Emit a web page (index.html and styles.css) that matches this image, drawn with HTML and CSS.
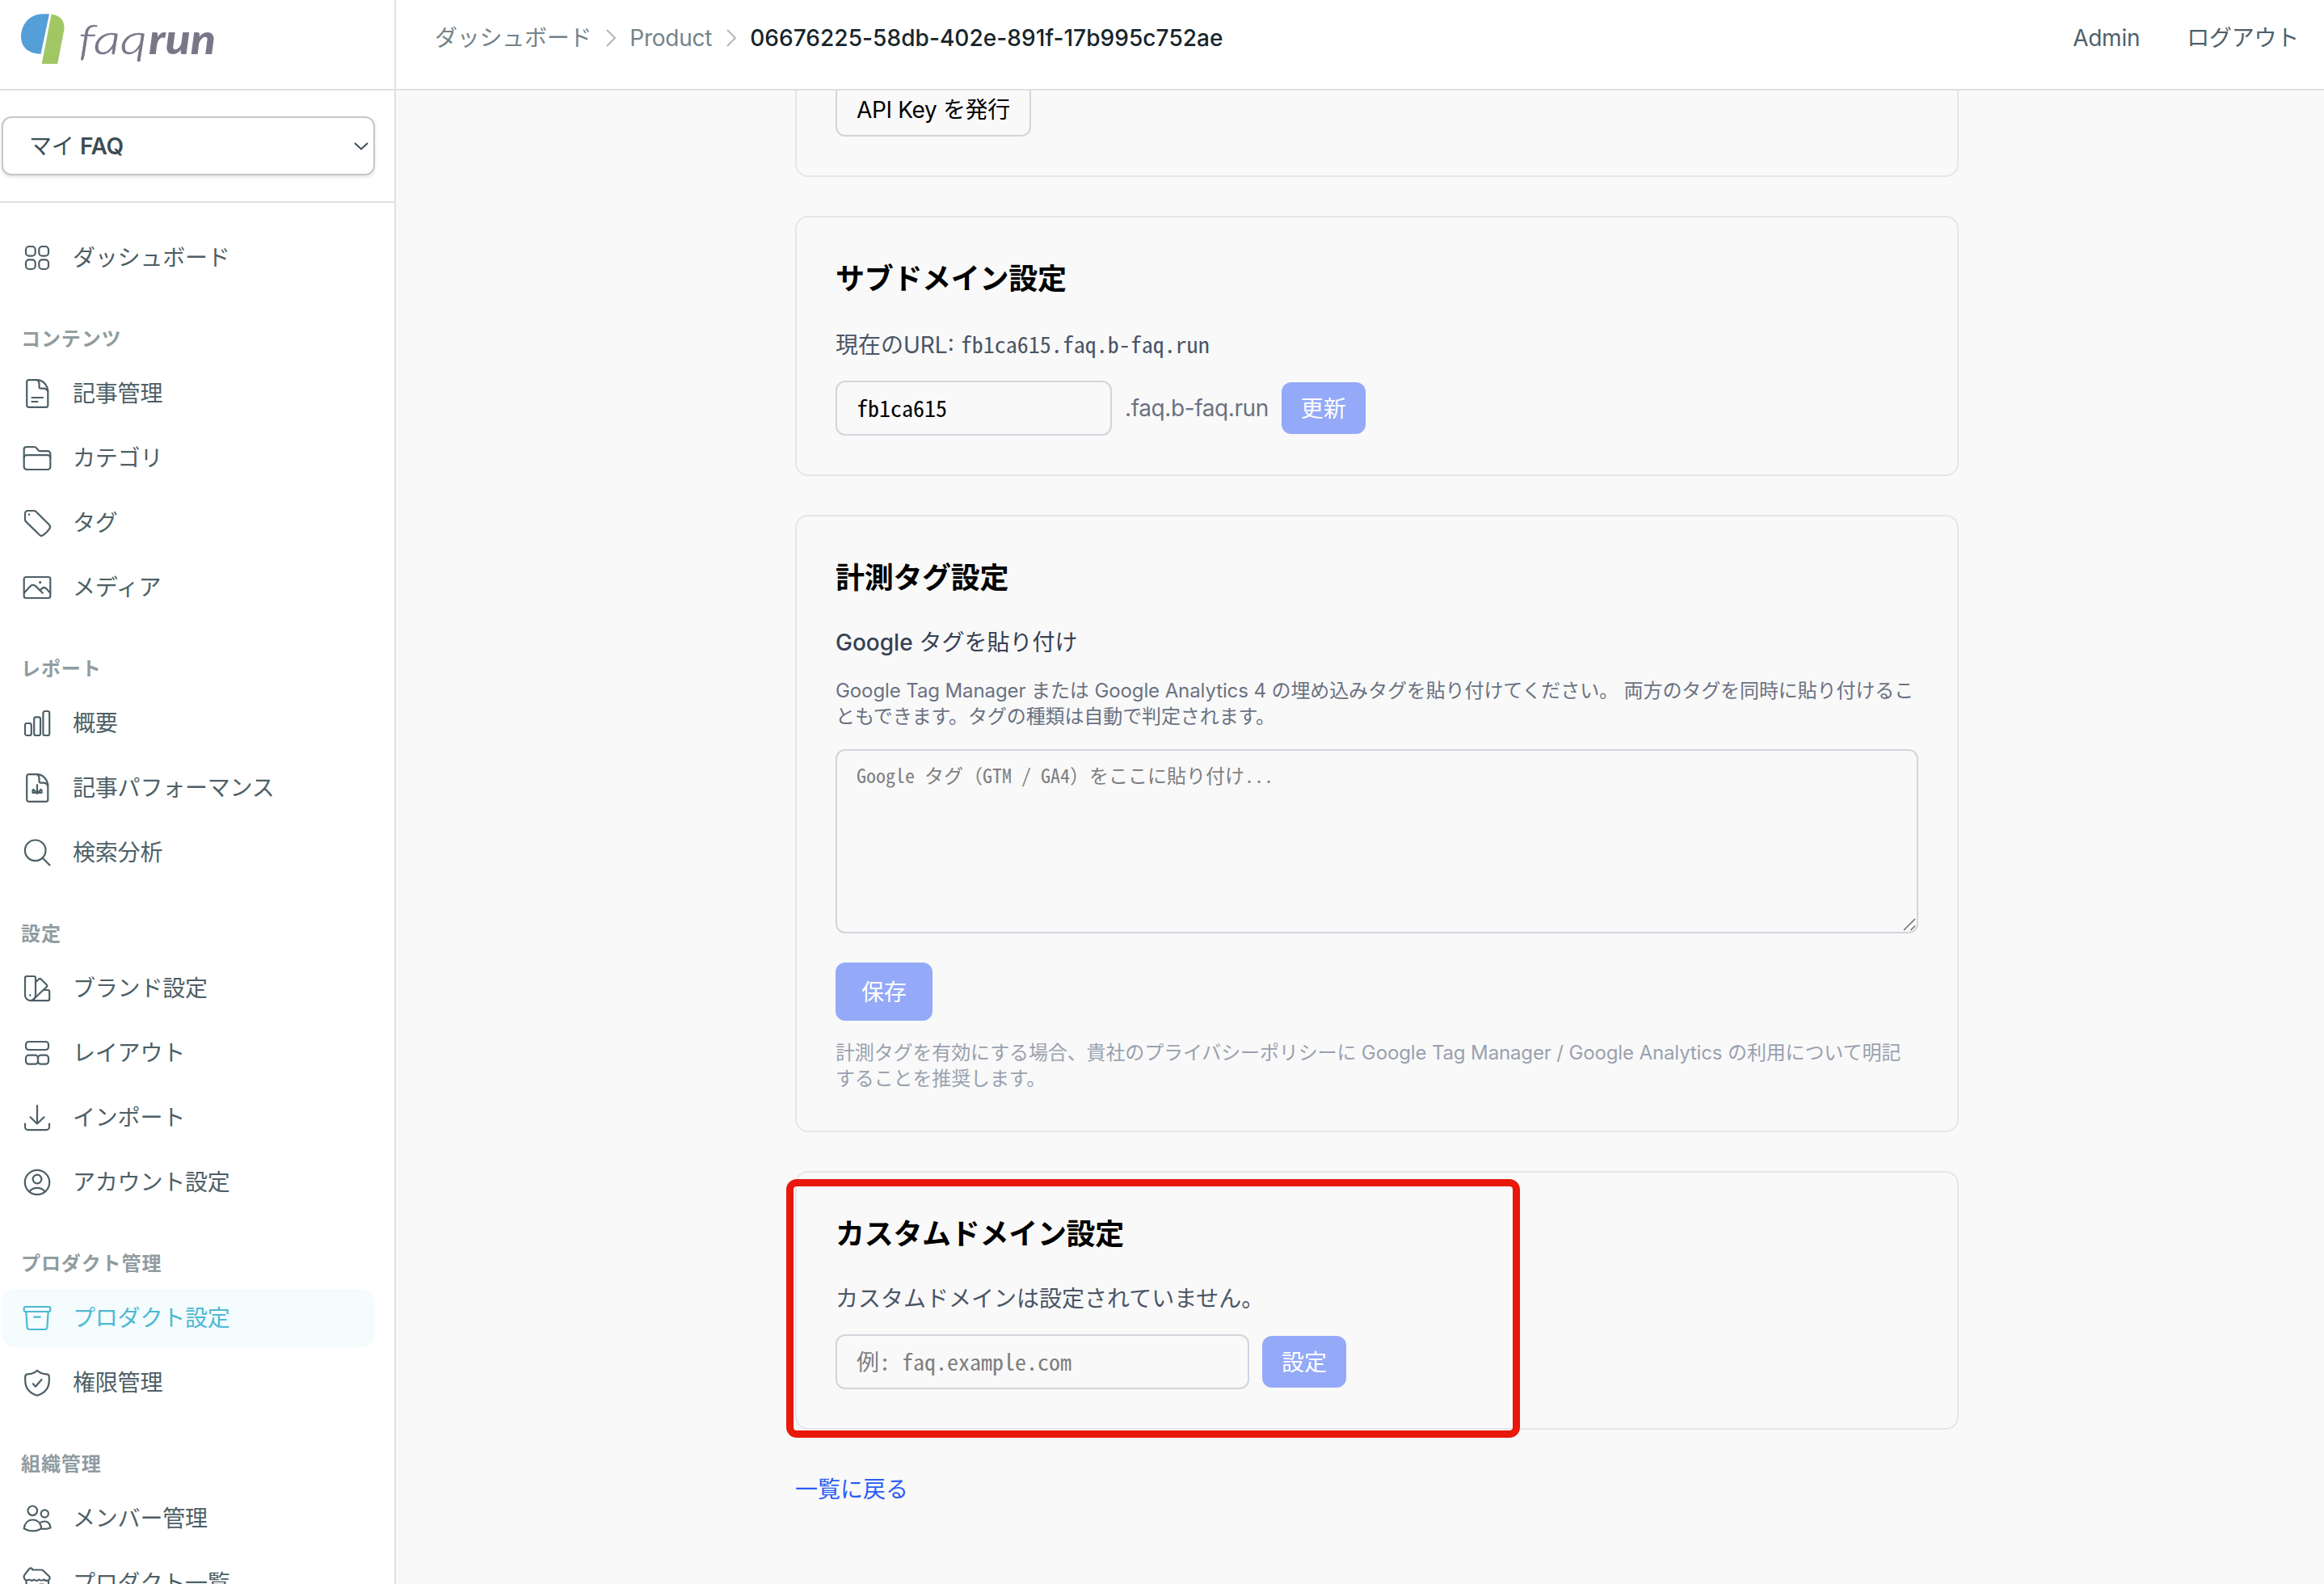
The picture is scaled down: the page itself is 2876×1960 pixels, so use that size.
FILE: index.html
```html
<!DOCTYPE html>
<html lang="ja">
<head>
    <meta charset="UTF-8">
    <title>faqrun - プロダクト設定</title>
    <link rel="stylesheet" href="styles.css">
</head>
<body>
    <aside class="sidebar">
        <div class="logo">
            <svg width="270" height="90" viewBox="0 0 270 90">
                <path fill="#549fd7" d="M61 17.3 50.5 66.7C36 67 26 58.500 26 45.500C26 30 37 17.300 53 17.300Z"/>
                <path fill="#a1c765" d="M63.500 17.700C74 18.500 81 26 79.300 37L71.200 79H51.700Z"/>
                <text class="logo-thin" x="97" y="67" textLength="85" lengthAdjust="spacingAndGlyphs">faq</text>
                <text class="logo-bold" x="184" y="67" textLength="83" lengthAdjust="spacingAndGlyphs">run</text>
            </svg>
        </div>
        <div class="product-picker">
            <div class="product-select">
                <span>マイ <b>FAQ</b></span>
                <svg width="18" height="10" viewBox="0 0 18 10"><path d="M1 1 9 8.500 17 1"/></svg>
            </div>
        </div>
        <nav class="nav">
            <a class="nav-item" href="#">
                <svg viewBox="0 0 36 36"><rect x="4" y="4" width="11.700" height="11.700" rx="4"/><rect x="20.300" y="4" width="11.700" height="11.700" rx="4"/><rect x="4" y="20.300" width="11.700" height="11.700" rx="4"/><rect x="20.300" y="20.300" width="11.700" height="11.700" rx="4"/></svg>
                ダッシュボード
            </a>

            <h3 class="nav-label">コンテンツ</h3>
            <a class="nav-item" href="#">
                <svg viewBox="0 0 36 36"><path d="M18 1.200H7.500A2.300 2.300 0 0 0 5.200 3.500V32.500A2.300 2.300 0 0 0 7.500 34.800H29A2.300 2.300 0 0 0 31.300 32.500V16C31.300 7.500 25 1.200 18 1.200Z"/><path d="M18 1.200C19.800 2.500 20.500 4 20.500 6V9.500A2.200 2.200 0 0 0 22.700 11.700H26C28.500 11.700 30.300 13 31.300 15M11.500 23H25M11.500 28H18.500"/></svg>
                記事管理
            </a>
            <a class="nav-item" href="#">
                <svg viewBox="0 0 36 36"><path d="M1.700 16V7A3 3 0 0 1 4.700 4H14.500C15.500 4 16.400 4.400 17 5.200L19.500 8.200C20.100 8.900 21 9.200 22 9.200H31A3.300 3.300 0 0 1 34.300 12.500V28.700A3.300 3.300 0 0 1 31 32H5A3.300 3.300 0 0 1 1.700 28.700Z"/><path d="M1.700 17.500A3.300 3.300 0 0 1 5 14.200H31A3.300 3.300 0 0 1 34.300 17.500"/></svg>
                カテゴリ
            </a>
            <a class="nav-item" href="#">
                <svg viewBox="0 0 36 36"><path d="M3 6.200A3.200 3.200 0 0 1 6.200 3H14C15 3 15.800 3.300 16.500 4L32.800 20.300C34.200 21.700 34.300 23.700 33.200 25.300C31.200 28.200 28.600 30.900 25.600 33C24.200 34.200 22.200 34.200 20.800 32.800L4 16.400C3.300 15.700 3 14.900 3 14Z"/><circle class="dot" cx="8" cy="7.800" r="1.300"/></svg>
                タグ
            </a>
            <a class="nav-item" href="#">
                <svg viewBox="0 0 36 36"><rect x="1.700" y="5" width="32.600" height="26" rx="2.500"/><path d="M2 24.500 9.300 16.600C11.500 14.200 14 14.200 16.500 16.600L24.800 24.800M21.500 21.500 23.500 19.500C25.500 17.500 27.500 17.500 29.500 19.500L34 24.500"/><circle class="dot" cx="21.700" cy="11.700" r="1.600"/></svg>
                メディア
            </a>

            <h3 class="nav-label">レポート</h3>
            <a class="nav-item" href="#">
                <svg viewBox="0 0 36 36"><rect x="3" y="18" width="7.800" height="15" rx="2.300"/><rect x="14.200" y="10.300" width="7.800" height="22.700" rx="2.300"/><rect x="25.400" y="3" width="7.800" height="30" rx="2.300"/></svg>
                概要
            </a>
            <a class="nav-item" href="#">
                <svg viewBox="0 0 36 36"><path d="M18 1.200H7.500A2.300 2.300 0 0 0 5.200 3.500V32.500A2.300 2.300 0 0 0 7.500 34.800H29A2.300 2.300 0 0 0 31.300 32.500V16C31.300 7.500 25 1.200 18 1.200Z"/><path d="M18 1.200C19.800 2.500 20.500 4 20.500 6V9.500A2.200 2.200 0 0 0 22.700 11.700H26C28.500 11.700 30.300 13 31.300 15M18 14V25M13.500 20 18 24.700 22.500 20M12.500 20.500V24H23.500V20.500"/></svg>
                記事パフォーマンス
            </a>
            <a class="nav-item" href="#">
                <svg viewBox="0 0 36 36"><circle cx="15.700" cy="15.300" r="12.800"/><path d="M24.800 24.800 33.500 33.500"/></svg>
                検索分析
            </a>

            <h3 class="nav-label">設定</h3>
            <a class="nav-item" href="#">
                <svg viewBox="0 0 36 36"><path d="M3 5A2 2 0 0 1 5 3H14A2 2 0 0 1 16 5V26.500A6.500 6.500 0 0 1 3 26.500Z"/><path d="M16 10.500 19.800 6.800A2.200 2.200 0 0 1 22.900 6.800L29.500 13.200A2.200 2.200 0 0 1 29.500 16.300L13.500 31.500M25.500 20H31A2.200 2.200 0 0 1 33.200 22.200V31A2.200 2.200 0 0 1 31 33.200H9.500"/><circle class="dot" cx="9.300" cy="26.500" r="1.200"/></svg>
                ブランド設定
            </a>
            <a class="nav-item" href="#">
                <svg viewBox="0 0 36 36"><rect x="4" y="4" width="28" height="10" rx="3.500"/><rect x="4" y="20.700" width="15" height="11" rx="3.500"/><rect x="19" y="20.700" width="13" height="11" rx="3.500"/></svg>
                レイアウト
            </a>
            <a class="nav-item" href="#">
                <svg viewBox="0 0 36 36"><path d="M18 3V25.500M9.500 17.300 18 25.500 26.500 17.300M3 25.500V29.500A3.600 3.600 0 0 0 6.600 33.100H29.400A3.600 3.600 0 0 0 33 29.500V25.500"/></svg>
                インポート
            </a>
            <a class="nav-item" href="#">
                <svg viewBox="0 0 36 36"><circle cx="18" cy="18" r="15.200"/><circle cx="18" cy="14" r="5.400"/><path d="M8.300 29.500C13.500 23.400 22.500 23.400 27.700 29.500"/></svg>
                アカウント設定
            </a>

            <h3 class="nav-label">プロダクト管理</h3>
            <a class="nav-item active" href="#">
                <svg viewBox="0 0 36 36"><rect x="1.700" y="4" width="32.600" height="6" rx="2"/><path d="M4.300 10 5.600 29.200A3 3 0 0 0 8.600 32H27.400A3 3 0 0 0 30.400 29.200L31.700 10M14.300 16.700H21.700"/></svg>
                プロダクト設定
            </a>
            <a class="nav-item" href="#">
                <svg viewBox="0 0 36 36"><path d="M18 2.800C15 5.800 11 7.200 6.500 7.400C4.500 7.500 3.200 8.500 3.200 10.500V15C3.200 24.500 9 31 18 33.800C27 31 32.800 24.500 32.800 15V10.500C32.800 8.500 31.500 7.500 29.500 7.400C25 7.200 21 5.800 18 2.800Z"/><path d="M12.800 19.300 16 22.700 23.500 14"/></svg>
                権限管理
            </a>

            <h3 class="nav-label">組織管理</h3>
            <a class="nav-item" href="#">
                <svg viewBox="0 0 36 36"><circle cx="12.300" cy="8.300" r="5.800"/><circle cx="27.300" cy="12" r="4.600"/><path d="M1.700 30.500C2.500 24 6.500 19.500 12.500 19.500C18.500 19.500 22.500 24 23.300 30.500C16.500 34.200 8.500 34.200 1.700 30.500ZM21.500 23.500C23.300 22 25 21.500 27.300 21.500C31.300 21.500 34 24.700 34.500 29.500C31 31 27 31.200 23.300 30.500"/></svg>
                メンバー管理
            </a>
            <a class="nav-item" href="#">
                <svg viewBox="0 0 36 36"><path d="M12.500 1.500C11.500-1.200 9.500-1 8 .5L2.500 7.500C.8 10 1.800 13.300 4 14.300C6.500 15 7.500 13.500 8.500 13.500C10.500 15.200 12.500 15 14 13.500C16 15.200 18.500 15.200 20.500 13.500C22 15 24.500 15 26 13.500C28 15 30.500 15 32.500 14C33.800 12.500 33.800 10.500 32.800 9.500L25.500 2.500C24.800 1.800 24 1.500 23 1.500ZM4.500 14.500V30A3 3 0 0 0 7.500 33H29A3 3 0 0 0 32 30V14.500M20 33V21.500A2 2 0 0 1 22 19.500H26"/></svg>
                プロダクト一覧
            </a>
        </nav>
    </aside>

    <div class="page">
        <header class="topbar">
            <div class="breadcrumb">
                <a href="#">ダッシュボード</a>
                <svg width="14" height="24" viewBox="0 0 14 24"><path d="M2 2 12 12 2 22"/></svg>
                <a href="#">Product</a>
                <svg width="14" height="24" viewBox="0 0 14 24"><path d="M2 2 12 12 2 22"/></svg>
                <span class="current">06676225-58db-402e-891f-17b995c752ae</span>
            </div>
            <div class="user-menu">
                <a href="#">Admin</a>
                <a href="#">ログアウト</a>
            </div>
        </header>

        <main class="content">
            <section class="card">
                <button class="btn-outline">API Key を発行</button>
            </section>

            <section class="card">
                <h2>サブドメイン設定</h2>
                <p class="text">現在のURL: <span class="mono">fb1ca615.faq.b-faq.run</span></p>
                <div class="form-row">
                    <input class="mono subdomain-input" type="text" value="fb1ca615">
                    <span class="suffix">.faq.b-faq.run</span>
                    <button class="btn">更新</button>
                </div>
            </section>

            <section class="card">
                <h2>計測タグ設定</h2>
                <label class="text label" for="gtag"><b>Google</b> タグを貼り付け</label>
                <p class="help">Google Tag Manager または Google Analytics 4 の埋め込みタグを貼り付けてください。 両方のタグを同時に貼り付けるこ<br>ともできます。タグの種類は自動で判定されます。</p>
                <div class="textarea-wrap">
                    <textarea class="mono" id="gtag" placeholder="Google タグ（GTM / GA4）をここに貼り付け..."></textarea>
                    <svg class="grip" width="16" height="16" viewBox="0 0 16 16"><path d="M1 15 15 1M9.500 15 15 9.500"/></svg>
                </div>
                <button class="btn btn-save">保存</button>
                <p class="help note">計測タグを有効にする場合、貴社のプライバシーポリシーに Google Tag Manager / Google Analytics の利用について明記<br>することを推奨します。</p>
            </section>

            <section class="card">
                <h2>カスタムドメイン設定</h2>
                <p class="text">カスタムドメインは設定されていません。</p>
                <div class="form-row">
                    <input class="mono domain-input" type="text" placeholder="例: faq.example.com">
                    <button class="btn">設定</button>
                </div>
                <div class="highlight"></div>
            </section>

            <a class="back-link" href="#">一覧に戻る</a>
        </main>
    </div>
</body>
</html>
```

FILE: styles.css
```css
* {
    box-sizing: border-box;
}
body {
    display: flex;
    height: 1960px;
    margin: 0;
    overflow: hidden;
    background-color: #f9f9f9;
    font-family: Inter, "Noto Sans CJK JP", sans-serif;
    font-size: 28px;
    line-height: 40px;
    color: #000;
}
a {
    color: inherit;
    text-decoration: none;
}
h2, h3, p {
    margin: 0;
}
svg {
    display: block;
    flex: none;
}
input, textarea, button {
    font-family: inherit;
    font-size: 28px;
    background: transparent;
}

/* Sidebar */
.sidebar {
    width: 490px;
    flex: none;
    overflow: hidden;
    background-color: #fff;
    border-right: 2px solid #dfe1e1;
}
.logo {
    height: 112px;
    border-bottom: 2px solid #dfe1e1;
}
.logo text {
    font-family: Lato, sans-serif;
    font-style: italic;
    font-size: 52px;
    fill: #797787;
}
.logo .logo-thin {
    font-weight: 300;
    stroke: #797787;
    stroke-width: 0.5;
}
.logo .logo-bold {
    font-weight: 900;
}
.product-picker {
    height: 139px;
    padding: 32px 24px 0 2px;
    border-bottom: 2px solid #dfe1e1;
}
.product-select {
    display: flex;
    align-items: center;
    justify-content: space-between;
    height: 73px;
    padding: 0 6px 0 32px;
    border: 2px solid #c2c8ca;
    border-radius: 12px;
    box-shadow: 0 2px 4px rgba(0, 0, 0, 0.12);
    letter-spacing: -0.3px;
    color: #3c4d53;
}
.product-select b {
    font-weight: 600;
}
.product-select svg {
    fill: none;
    stroke: #3c4d53;
    stroke-width: 2;
}
.nav {
    display: flex;
    flex-direction: column;
    gap: 8px;
    padding: 32px 24px 0 2px;
}
.nav-item {
    display: flex;
    align-items: center;
    gap: 26px;
    height: 72px;
    flex: none;
    padding-left: 26px;
    border-radius: 16px;
    letter-spacing: -0.2px;
    color: #4d5f66;
}
.nav-item svg {
    width: 36px;
    height: 36px;
    overflow: visible;
    fill: none;
    stroke: currentColor;
    stroke-width: 2.2;
    stroke-linecap: round;
    stroke-linejoin: round;
}
.nav-item .dot {
    fill: currentColor;
    stroke: none;
}
.nav-item.active {
    background-color: #f4fcfe;
    color: #4eb9d2;
}
.nav-label {
    height: 36px;
    margin: 39px 0 5px 24px;
    font-size: 24px;
    font-weight: 700;
    line-height: 36px;
    letter-spacing: 0.9px;
    color: #909ca0;
}

/* Top bar */
.page {
    display: flex;
    flex-direction: column;
    flex: 1;
    min-width: 0;
}
.topbar {
    display: flex;
    justify-content: space-between;
    position: relative;
    z-index: 1;
    height: 112px;
    flex: none;
    padding: 27px 31px 0 48px;
    background-color: #fff;
    border-bottom: 2px solid #dfe1e1;
    letter-spacing: -0.25px;
}
.breadcrumb {
    display: flex;
    align-items: flex-start;
    gap: 16.5px;
    color: #74838a;
}
.breadcrumb svg {
    margin-top: 8px;
    fill: none;
    stroke: #b0b9bd;
    stroke-width: 2;
}
.breadcrumb .current {
    font-weight: 500;
    letter-spacing: 0.07px;
    color: #16252b;
}
.user-menu {
    display: flex;
    gap: 58px;
    color: #4f6068;
}

/* Settings cards */
.content {
    width: 1440px;
    margin: -61px 0 0 494px;
}
.card {
    position: relative;
    margin-bottom: 48px;
    padding: 48px;
    border: 2px solid #e4e6eb;
    border-radius: 16px;
}
.card h2 {
    margin-bottom: 32px;
    font-size: 36px;
    font-weight: 700;
    line-height: 56px;
    letter-spacing: -0.3px;
}
.text {
    color: #4a5565;
}
.label {
    display: block;
    color: #364153;
}
.label b {
    font-weight: 500;
}
.help {
    margin-top: 24px;
    font-size: 24px;
    line-height: 32px;
    letter-spacing: -0.1px;
    color: #6a7282;
    white-space: nowrap;
}
.help.note {
    letter-spacing: -0.13px;
    color: #99a1af;
}
.mono {
    font-family: "Noto Sans Mono CJK JP", "DejaVu Sans Mono", monospace;
}
.form-row {
    display: flex;
    align-items: center;
    gap: 16px;
    margin-top: 24px;
}
.form-row input {
    height: 68px;
    padding: 0 24px 3px;
    border: 2px solid #d1d5dc;
    border-radius: 12px;
}
.subdomain-input {
    width: 342px;
}
.domain-input {
    width: 512px;
}
.suffix {
    letter-spacing: -0.4px;
    color: #6a7282;
}
.btn {
    display: block;
    height: 64px;
    padding: 0 24px 3px;
    border: none;
    border-radius: 12px;
    background-color: #94a9f7;
    color: #fff;
}
.btn-save {
    height: 72px;
    margin-top: 36px;
    padding: 0 32px 3px;
}
.btn-outline {
    display: block;
    height: 68px;
    padding: 0 24px 3px;
    border: 2px solid #d1d5dc;
    border-radius: 12px;
    letter-spacing: -0.35px;
    color: #000;
}
.textarea-wrap {
    position: relative;
    height: 228px;
    margin-top: 24px;
}
textarea {
    display: block;
    width: 100%;
    height: 228px;
    padding: 14px 24px;
    border: 2px solid #d1d5dc;
    border-radius: 12px;
    font-size: 24px;
    line-height: 32px;
    resize: none;
}
::placeholder {
    color: #7f7f7f;
}
.grip {
    position: absolute;
    right: 3px;
    bottom: 3px;
    fill: none;
    stroke: #6b6b6b;
    stroke-width: 1.5;
}
.highlight {
    position: absolute;
    top: 8px;
    left: -13px;
    width: 908px;
    height: 320px;
    border: 9px solid #e8180c;
    border-radius: 13px;
}
.back-link {
    display: inline-block;
    margin-top: 6px;
    color: #2b5df6;
}
```
